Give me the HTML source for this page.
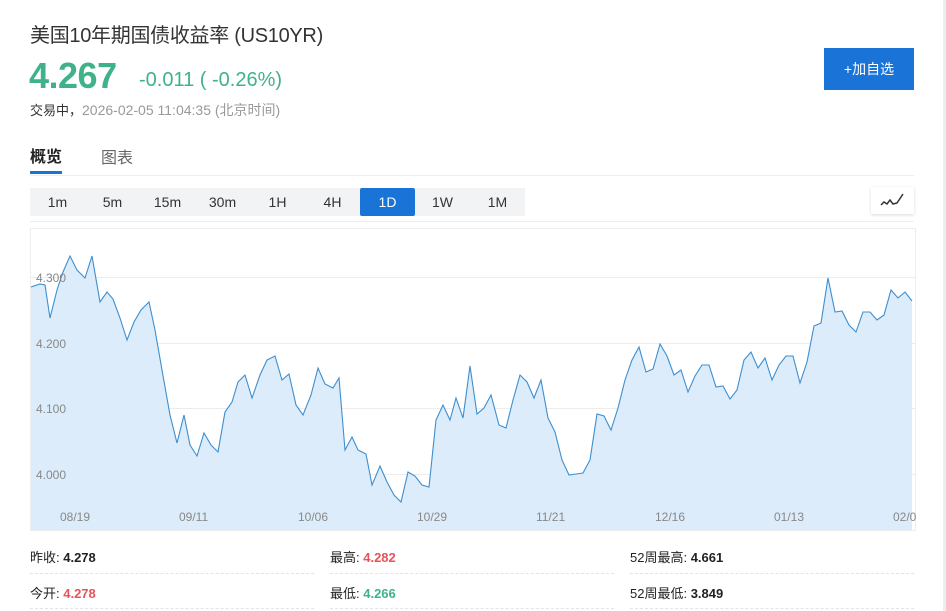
<!DOCTYPE html>
<html><head><meta charset="utf-8"><style>
*{margin:0;padding:0;box-sizing:border-box}
body{width:946px;height:611px;overflow:hidden;background:#fff;font-family:"Liberation Sans","Noto Sans CJK SC",sans-serif;position:relative;color:#333}
.a{position:absolute;white-space:nowrap}
.tabs{position:absolute;left:30px;top:188px;width:495px;height:28px;background:#f2f3f5;display:flex}
.tabs div{width:55px;height:28px;line-height:28px;text-align:center;font-size:14px;color:#333}
.tabs .on{background:#1a73d6;color:#fff;border-radius:2px}
.dash{position:absolute;height:1px;border-top:1px dashed #e3e3e3}
.lbl{font-size:13px;color:#222}
.lbl b{font-weight:bold}
</style></head><body>
<div style="position:absolute;right:0;top:0;width:3px;height:611px;background:#eceef1"></div>
<div class="a" style="left:30px;top:19px;font-size:20px;color:#333;letter-spacing:-0.3px">美国10年期国债收益率 (US10YR)</div>
<div class="a" style="left:29px;top:55px;font-size:36px;font-weight:bold;color:#3fb28a;letter-spacing:-0.5px">4.267</div>
<div class="a" style="left:139px;top:69px;font-size:20px;color:#3fb28a">-0.011 ( -0.26%)</div>
<div class="a" style="left:30px;top:100px;font-size:13px;color:#333">交易中，<span style="color:#999;font-size:14px">2026-02-05 11:04:35 (北京时间)</span></div>
<div class="a" style="left:824px;top:48px;width:90px;height:42px;background:#1a73d6;color:#fff;font-size:14px;line-height:42px;text-align:center">+加自选</div>
<div class="a" style="left:30px;top:143px;font-size:16px;font-weight:bold;color:#222">概览</div>
<div class="a" style="left:30px;top:171px;width:32px;height:3px;background:#1a73d6"></div>
<div class="a" style="left:101px;top:144px;font-size:16px;color:#666">图表</div>
<div class="a" style="left:30px;top:175px;width:884px;height:1px;background:#eee"></div>
<div class="tabs"><div>1m</div><div>5m</div><div>15m</div><div>30m</div><div>1H</div><div>4H</div><div class="on">1D</div><div>1W</div><div>1M</div></div>
<div class="a" style="left:871px;top:187px;width:43px;height:27px;background:#fff;box-shadow:0 1px 3px rgba(0,0,0,.15)">
<svg width="43" height="27"><path d="M10 18 L13 15 L16 17 L19 13 L22 17 L26 16 L32 7" fill="none" stroke="#333" stroke-width="1.5"/></svg></div>
<div class="a" style="left:30px;top:221px;width:884px;height:1px;background:#eee"></div>
<svg class="a" style="left:0;top:0" width="946" height="611">
<rect x="30.5" y="228.5" width="885" height="302" fill="#fff" stroke="#eee"/>
<g stroke="#ececec" stroke-width="1"><line x1="31" y1="277.5" x2="915" y2="277.5"/><line x1="31" y1="343.5" x2="915" y2="343.5"/><line x1="31" y1="408.5" x2="915" y2="408.5"/><line x1="31" y1="474.5" x2="915" y2="474.5"/></g>
<polygon fill="#dcecfb" points="31,530 31,287 40,284 45,285 50,318 57,290 63,272 70,256 77,270 85,278 92,256 100,302 107,292 113,299 120,318 127,340 134,322 141,310 149,302 155,330 162,370 170,415 177,443 184,415 190,445 197,456 204,433 211,445 218,452 225,412 232,402 238,382 245,375 252,398 260,375 267,360 275,356 282,380 289,374 296,405 303,415 311,395 318,368 325,384 333,388 339,378 345,450 352,437 358,450 366,454 372,485 380,466 387,482 394,495 401,502 408,472 415,476 422,485 429,487 436,420 443,405 450,420 456,398 463,418 470,366 477,414 484,408 491,395 499,425 506,428 513,400 520,375 527,382 534,398 541,380 548,418 555,432 562,460 569,475 576,474 583,473 590,460 597,414 604,416 611,430 618,408 625,380 632,360 639,347 646,372 653,369 660,344 667,356 674,375 681,370 688,392 695,376 702,365 709,365 716,387 723,386 730,399 737,390 744,360 751,352 758,368 765,358 772,380 779,365 786,356 793,356 800,383 807,362 814,326 821,323 828,278 835,312 842,311 849,325 856,332 863,312 870,312 877,320 884,315 891,290 898,298 905,292 912,301 912,530"/>
<polyline fill="none" stroke="#3d8fd0" stroke-width="1.1" points="31,287 40,284 45,285 50,318 57,290 63,272 70,256 77,270 85,278 92,256 100,302 107,292 113,299 120,318 127,340 134,322 141,310 149,302 155,330 162,370 170,415 177,443 184,415 190,445 197,456 204,433 211,445 218,452 225,412 232,402 238,382 245,375 252,398 260,375 267,360 275,356 282,380 289,374 296,405 303,415 311,395 318,368 325,384 333,388 339,378 345,450 352,437 358,450 366,454 372,485 380,466 387,482 394,495 401,502 408,472 415,476 422,485 429,487 436,420 443,405 450,420 456,398 463,418 470,366 477,414 484,408 491,395 499,425 506,428 513,400 520,375 527,382 534,398 541,380 548,418 555,432 562,460 569,475 576,474 583,473 590,460 597,414 604,416 611,430 618,408 625,380 632,360 639,347 646,372 653,369 660,344 667,356 674,375 681,370 688,392 695,376 702,365 709,365 716,387 723,386 730,399 737,390 744,360 751,352 758,368 765,358 772,380 779,365 786,356 793,356 800,383 807,362 814,326 821,323 828,278 835,312 842,311 849,325 856,332 863,312 870,312 877,320 884,315 891,290 898,298 905,292 912,301"/>
<g font-family="Liberation Sans" font-size="12" fill="#888"><text x="36" y="282">4.300</text><text x="36" y="348">4.200</text><text x="36" y="413">4.100</text><text x="36" y="479">4.000</text>
<text x="60" y="521">08/19</text><text x="179" y="521">09/11</text><text x="298" y="521">10/06</text><text x="417" y="521">10/29</text><text x="536" y="521">11/21</text><text x="655" y="521">12/16</text><text x="774" y="521">01/13</text><text x="893" y="521">02/0</text></g>
</svg>
<div class="a lbl" style="left:30px;top:547px">昨收: <b>4.278</b></div>
<div class="a lbl" style="left:330px;top:547px">最高: <b style="color:#e5545b">4.282</b></div>
<div class="a lbl" style="left:630px;top:547px">52周最高: <b>4.661</b></div>
<div class="a lbl" style="left:30px;top:583px">今开: <b style="color:#e5545b">4.278</b></div>
<div class="a lbl" style="left:330px;top:583px">最低: <b style="color:#3fb28a">4.266</b></div>
<div class="a lbl" style="left:630px;top:583px">52周最低: <b>3.849</b></div>
<div class="dash" style="left:30px;top:573px;width:284px"></div>
<div class="dash" style="left:330px;top:573px;width:284px"></div>
<div class="dash" style="left:630px;top:573px;width:284px"></div>
<div class="dash" style="left:30px;top:608px;width:284px"></div>
<div class="dash" style="left:330px;top:608px;width:284px"></div>
<div class="dash" style="left:630px;top:608px;width:284px"></div>
</body></html>
